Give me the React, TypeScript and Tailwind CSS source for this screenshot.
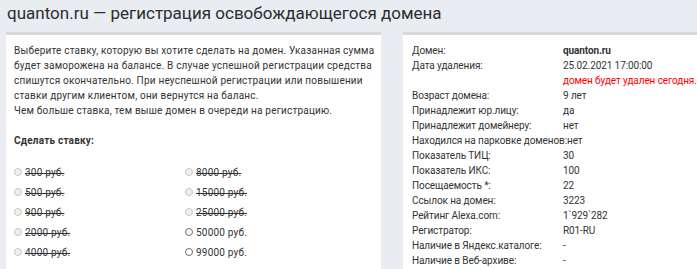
import React from 'react';

const bids = [
  [
    { label: '300 руб.', disabled: true },
    { label: '500 руб.', disabled: true },
    { label: '900 руб.', disabled: true },
    { label: '2000 руб.', disabled: true },
    { label: '4000 руб.', disabled: true },
  ],
  [
    { label: '8000 руб.', disabled: true },
    { label: '15000 руб.', disabled: true },
    { label: '25000 руб.', disabled: true },
    { label: '50000 руб.', disabled: false },
    { label: '99000 руб.', disabled: false },
  ],
];

const intro = [
  'Выберите ставку, которую вы хотите сделать на домен. Указанная сумма',
  'будет заморожена на балансе. В случае успешной регистрации средства',
  'спишутся окончательно. При неуспешной регистрации или повышении',
  'ставки другим клиентом, они вернутся на баланс.',
  'Чем больше ставка, тем выше домен в очереди на регистрацию.',
];

const info: { label: string; value: string; bold?: boolean; red?: boolean }[] = [
  { label: 'Домен:', value: 'quanton.ru', bold: true },
  { label: 'Дата удаления:', value: '25.02.2021 17:00:00' },
  { label: '', value: 'домен будет удален сегодня.', red: true },
  { label: 'Возраст домена:', value: '9 лет' },
  { label: 'Принадлежит юр.лицу:', value: 'да' },
  { label: 'Принадлежит домейнеру:', value: 'нет' },
  { label: 'Находился на парковке доменов:', value: 'нет' },
  { label: 'Показатель ТИЦ:', value: '30' },
  { label: 'Показатель ИКС:', value: '100' },
  { label: 'Посещаемость *:', value: '22' },
  { label: 'Ссылок на домен:', value: '3223' },
  { label: 'Рейтинг Alexa.com:', value: '1`929`282' },
  { label: 'Регистратор:', value: 'R01-RU' },
  { label: 'Наличие в Яндекс.каталоге:', value: '-' },
  { label: 'Наличие в Веб-архиве:', value: '-' },
];

function Radio({ label, disabled }: { label: string; disabled: boolean }) {
  return (
    <label className="flex items-center h-5">
      <span
        className={
          disabled
            ? 'w-[8px] h-[8px] rounded-full border border-[#c8c8c8] bg-[#efefef] mr-[3px]'
            : 'w-[8px] h-[8px] rounded-full border border-[#6b6b6b] bg-white mr-[3px]'
        }
      />
      <span className={disabled ? 'line-through' : ''}>{label}</span>
    </label>
  );
}

export default function App() {
  return (
    <div
      className="w-[697px] h-[269px] overflow-hidden bg-[#e9ecf1] text-[#333] text-[10px]"
      style={{ fontFamily: 'Roboto, "Noto Sans", sans-serif' }}
    >
      <h1 className="text-[17px] leading-[27px] pl-[7px] text-[#2d2d2d]">
        quanton.ru — регистрация освобождающегося домена
      </h1>

      <div className="flex gap-[22px] mt-[5px] pl-[6px]">
        {/* Bid panel */}
        <div className="w-[375px] h-[240px] bg-white border-t-[3px] border-[#d6d9de] pl-[8px] pr-[6px] pt-[8px] leading-[15px] tracking-[0.2px]">
          <div className="whitespace-nowrap">
            {intro.map((line) => (
              <div key={line}>{line}</div>
            ))}
          </div>
          <p className="mt-[15px] font-bold">Сделать ставку:</p>

          <div className="flex mt-[14px]">
            {bids.map((col, i) => (
              <div key={i} className="w-[171px]">
                {col.map((b) => (
                  <Radio key={b.label} label={b.label} disabled={b.disabled} />
                ))}
              </div>
            ))}
          </div>
        </div>

        {/* Domain info */}
        <div className="flex-1 h-[240px] bg-white border-t-[3px] border-[#d6d9de] pl-[9px] pt-[8px] leading-[15px] tracking-[-0.1px]">
          {info.map((row, i) => (
            <div key={i} className="flex h-[15px] whitespace-nowrap">
              <div className="min-w-[151px] shrink-0">{row.label}</div>
              <div className={row.bold ? 'font-bold' : row.red ? 'text-[#ff0000]' : ''}>
                {row.value}
              </div>
            </div>
          ))}
        </div>
      </div>
    </div>
  );
}
